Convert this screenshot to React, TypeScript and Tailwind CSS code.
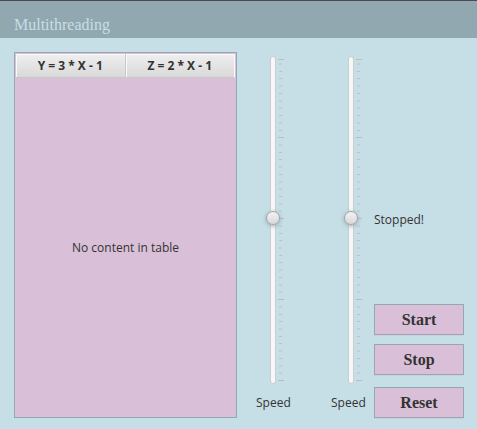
import React from "react";

const TICK_STEP = 7.36;
const TICKS = Array.from({ length: 44 }, (_, i) => ({
  y: Math.round((324.5 - i * TICK_STEP) * 2) / 2,
  major: i % 11 === 0,
}));

function TickMarks() {
  return (
    <svg
      className="-ml-[2px] h-[328px] w-[6px] shrink-0"
      viewBox="0 0 6 328"
      aria-hidden="true"
    >
      <rect x="0" y="3" width="6" height="1" fill="#bcc0c3" />
      {TICKS.map((tick) => (
        <rect
          key={tick.y}
          x={tick.major ? 0 : 1}
          y={tick.y - 0.5}
          width={tick.major ? 6 : 3}
          height="1"
          fill={tick.major ? "#bcbcc0" : "#c3bfc0"}
        />
      ))}
    </svg>
  );
}

function SpeedSlider({ id, inset }: { id: string; inset: string }) {
  return (
    <div className="flex w-[33px] shrink-0 flex-col pt-[4px]">
      <div className={`flex ${inset}`}>
        <input
          id={id}
          type="range"
          min={0}
          max={100}
          step="any"
          defaultValue={50.6}
          className="relative z-10 m-0 h-[328px] w-[14px] shrink-0 appearance-none bg-transparent [direction:rtl] [writing-mode:vertical-lr] [&::-webkit-slider-runnable-track]:w-[6px] [&::-webkit-slider-runnable-track]:rounded-full [&::-webkit-slider-runnable-track]:border [&::-webkit-slider-runnable-track]:border-[#cbcdce] [&::-webkit-slider-runnable-track]:bg-[#f7f7f7] [&::-webkit-slider-thumb]:-ml-[5px] [&::-webkit-slider-thumb]:h-[14px] [&::-webkit-slider-thumb]:w-[14px] [&::-webkit-slider-thumb]:appearance-none [&::-webkit-slider-thumb]:rounded-full [&::-webkit-slider-thumb]:border [&::-webkit-slider-thumb]:border-[#a3a3a3] [&::-webkit-slider-thumb]:bg-linear-to-b [&::-webkit-slider-thumb]:from-[#f2f2f2] [&::-webkit-slider-thumb]:to-[#d9d9d9] [&::-webkit-slider-thumb]:shadow-[0_1px_4px_#8fa9b4]"
        />
        <TickMarks />
      </div>
      <label htmlFor={id} className="mt-[11px] whitespace-nowrap leading-4">
        Speed
      </label>
    </div>
  );
}

function ActionButton({ children }: { children: React.ReactNode }) {
  return (
    <button
      type="button"
      className="h-[31px] w-full border border-[#93a8b0] bg-[#d9bfd8] font-['Liberation_Serif',serif] text-[16px] font-bold leading-5 text-[#333] shadow-[0_1px_0_#d3cbdc]"
    >
      {children}
    </button>
  );
}

const COLUMNS = ["Y = 3 * X - 1", "Z = 2 * X - 1"];

export default function App() {
  return (
    <div className="flex min-h-screen flex-col bg-[#c6dfe7] font-['Open_Sans','Noto_Sans',sans-serif] text-[12px] text-[#333]">
      <header className="h-[38px] border-t border-[#4c4b50] bg-[#92a8b0] px-[14px] pt-[14px]">
        <h1 className="font-['Liberation_Serif',serif] text-[16px] leading-5 text-[#c6dfe7]">
          Multithreading
        </h1>
      </header>
      <main className="flex flex-1 pt-[14px] pr-[13px] pb-[11px] pl-[14px]">
        <div className="flex min-w-0 flex-1 border border-[#93a8b0] bg-[#d9bfd8] p-px">
          <table className="w-full table-fixed border-separate border-spacing-0">
            <thead>
              <tr className="h-[24px]">
                {COLUMNS.map((column) => (
                  <th
                    key={column}
                    scope="col"
                    className="border-r border-b border-[#c8c8c8] bg-linear-to-b from-[#efefef] to-[#d9d9d9] p-0 pt-px text-center font-['Noto_Sans',sans-serif] font-bold leading-4 shadow-[inset_1px_1px_0_#fafafa] last:border-r-[#fafafa]"
                  >
                    {column}
                  </th>
                ))}
              </tr>
            </thead>
            <tbody>
              <tr>
                <td colSpan={2} className="p-0 pt-[2px] text-center align-middle">
                  No content in table
                </td>
              </tr>
            </tbody>
          </table>
        </div>
        <div className="ml-[19px] flex gap-[42px]">
          <SpeedSlider id="speed-y" inset="pl-[10px]" />
          <SpeedSlider id="speed-z" inset="pl-[13px]" />
        </div>
        <div className="ml-[10px] flex w-[90px] shrink-0 flex-col">
          <p className="mt-[160px] leading-4" role="status">
            Stopped!
          </p>
          <div className="mt-auto flex flex-col gap-[12px]">
            <div className="flex flex-col gap-[9px]">
              <ActionButton>Start</ActionButton>
              <ActionButton>Stop</ActionButton>
            </div>
            <ActionButton>Reset</ActionButton>
          </div>
        </div>
      </main>
    </div>
  );
}
